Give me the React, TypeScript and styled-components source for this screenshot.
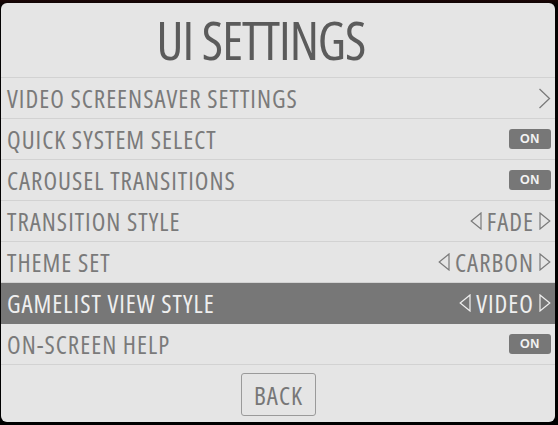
import React from "react";
import styled, { createGlobalStyle } from "styled-components";

const Global = createGlobalStyle`
  html, body { margin: 0; padding: 0; background: #0a0505; }
  body { width: 558px; height: 425px; overflow: hidden; }
`;

const Screen = styled.div`
  width: 558px;
  height: 425px;
  background: linear-gradient(180deg, #1a0606 0px, #050303 6px, #000 100%);
  padding: 3px 3px 3px 1px;
  box-sizing: border-box;
`;

const Panel = styled.div`
  width: 554px;
  height: 419px;
  background: #e5e5e5;
  border-radius: 6px;
  display: flex;
  flex-direction: column;
  overflow: hidden;
  font-family: "Open Sans", "DejaVu Sans Condensed", sans-serif;
  font-stretch: 75%;
`;

const Title = styled.div`
  height: 75px;
  display: flex;
  align-items: center;
  justify-content: center;
  font-size: 52px;
  letter-spacing: -1px;
  color: #5b5b5b;
  border-bottom: 1px solid #d2d2d2;
  box-sizing: border-box;
  padding: 0 34px 2px 0;
`;

const Row = styled.div<{ $selected?: boolean }>`
  height: 41px;
  box-sizing: border-box;
  border-bottom: 1px solid ${(p) => (p.$selected ? "#777" : "#d2d2d2")};
  background: ${(p) => (p.$selected ? "#777777" : "transparent")};
  color: ${(p) => (p.$selected ? "#efefef" : "#7a7a7a")};
  display: flex;
  align-items: center;
  justify-content: space-between;
  padding: 0 4px 0 6px;
  font-size: 25px;
  letter-spacing: 1px;
`;

const Label = styled.span`
  line-height: 1;
`;

const Badge = styled.span`
  width: 42px;
  height: 20px;
  border-radius: 3px;
  background: #777;
  color: #f2f2f2;
  font-family: "Liberation Sans", Arial, sans-serif;
  font-stretch: normal;
  font-weight: bold;
  font-size: 12.5px;
  letter-spacing: 0.6px;
  display: flex;
  align-items: center;
  justify-content: center;
`;

const Option = styled.span`
  display: flex;
  align-items: center;
  gap: 5px;
  line-height: 1;
`;

const Footer = styled.div`
  flex: 1;
  display: flex;
  justify-content: center;
  padding-top: 8px;
`;

const Button = styled.div`
  width: 75px;
  height: 43px;
  box-sizing: border-box;
  border: 1px solid #9a9a9a;
  border-radius: 3px;
  display: flex;
  align-items: center;
  justify-content: center;
  font-size: 25px;
  letter-spacing: 1px;
  padding-left: 1px;
  color: #777;
`;

const Tri = ({ dir, color }: { dir: "l" | "r"; color: string }) => (
  <svg width="12" height="18" viewBox="0 0 12 18">
    {dir === "l" ? (
      <path d="M11 1 L1.2 9 L11 17 Z" fill="none" stroke={color} strokeWidth="1.2" />
    ) : (
      <path d="M1 1 L10.8 9 L1 17 Z" fill="none" stroke={color} strokeWidth="1.2" />
    )}
  </svg>
);

const Chevron = () => (
  <svg width="13" height="21" viewBox="0 0 13 21">
    <path d="M1.5 1 L11.5 10.5 L1.5 20" fill="none" stroke="#7a7a7a" strokeWidth="1.3" />
  </svg>
);

type Item =
  | { label: string; kind: "sub" }
  | { label: string; kind: "switch" }
  | { label: string; kind: "option"; value: string; selected?: boolean };

const items: Item[] = [
  { label: "VIDEO SCREENSAVER SETTINGS", kind: "sub" },
  { label: "QUICK SYSTEM SELECT", kind: "switch" },
  { label: "CAROUSEL TRANSITIONS", kind: "switch" },
  { label: "TRANSITION STYLE", kind: "option", value: "FADE" },
  { label: "THEME SET", kind: "option", value: "CARBON" },
  { label: "GAMELIST VIEW STYLE", kind: "option", value: "VIDEO", selected: true },
  { label: "ON-SCREEN HELP", kind: "switch" },
];

export default function App() {
  return (
    <>
      <Global />
      <Screen>
        <Panel>
          <Title>UI SETTINGS</Title>
          {items.map((it) => {
            const sel = it.kind === "option" && !!it.selected;
            const c = sel ? "#efefef" : "#7a7a7a";
            return (
              <Row key={it.label} $selected={sel}>
                <Label>{it.label}</Label>
                {it.kind === "sub" && <Chevron />}
                {it.kind === "switch" && <Badge>ON</Badge>}
                {it.kind === "option" && (
                  <Option>
                    <Tri dir="l" color={c} />
                    {it.value}
                    <Tri dir="r" color={c} />
                  </Option>
                )}
              </Row>
            );
          })}
          <Footer>
            <Button>BACK</Button>
          </Footer>
        </Panel>
      </Screen>
    </>
  );
}
